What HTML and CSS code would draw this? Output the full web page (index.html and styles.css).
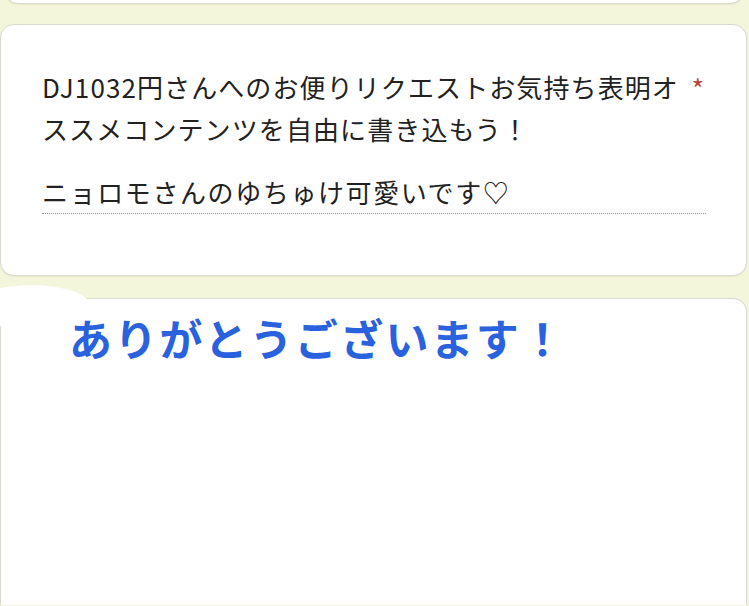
FILE: index.html
```html
<!DOCTYPE html>
<html lang="ja">
<head>
    <meta charset="UTF-8">
    <meta name="viewport" content="width=device-width, initial-scale=1.0">
    <title>お便りフォーム</title>
    <link rel="stylesheet" href="styles.css">
</head>
<body>
    <div id="page">
        <div class="card card-prev"></div>

        <div class="card question-card">
            <div class="question-title">
                <div class="question-text">DJ1032円さんへのお便りリクエストお気持ち表明オススメコンテンツを自由に書き込もう！</div>
                <span class="required">*</span>
            </div>
            <div class="answer">ニョロモさんのゆちゅけ可愛いです♡</div>
        </div>

        <div class="card thanks-card">
            <p class="thanks">ありがとうございます！</p>
        </div>
    </div>
</body>
</html>
```

FILE: styles.css
```css
body {
    margin: 0;
    padding: 0;
    height: 606px;
    background-color: #f4f6dc;
    font-family: "Noto Sans CJK JP", "Noto Sans", sans-serif;
    color: #222222;
    overflow: hidden;
}

#page {
    padding-right: 2px;
}

.card {
    background-color: #ffffff;
    border: 1px solid #d8dacd;
    border-radius: 14px;
    box-shadow: 0 1px 2px rgba(0, 0, 0, 0.06);
}

.card-prev {
    height: 40px;
    margin: -38px 3px 0 4px;
}

.question-card {
    margin-top: 20px;
    padding: 41px 40px 61px 41px;
}

.question-title {
    display: flex;
    align-items: flex-start;
    gap: 8px;
}

.question-text {
    flex: 1;
    font-size: 26px;
    line-height: 42px;
    letter-spacing: 1.1px;
}

.required {
    color: #b5473a;
    font-size: 27px;
    line-height: 46px;
    padding-right: 2px;
}

.answer {
    margin-top: 21px;
    width: 664px;
    font-size: 26px;
    line-height: 42px;
    letter-spacing: 1.6px;
    border-bottom: 1px dotted #9a9a9a;
}

.thanks-card {
    position: relative;
    margin-top: 22px;
    height: 306px;
    border-bottom: none;
    border-radius: 14px 14px 0 0;
    box-shadow: none;
}

.thanks-card::before {
    content: "";
    position: absolute;
    top: -14px;
    left: -30px;
    width: 120px;
    height: 44px;
    border-radius: 50%;
    background-color: #ffffff;
}

.thanks {
    position: relative;
    margin: 8px 0 0 68px;
    font-size: 43px;
    line-height: 60px;
    font-weight: bold;
    letter-spacing: 2.2px;
    color: #2a62de;
}
```
